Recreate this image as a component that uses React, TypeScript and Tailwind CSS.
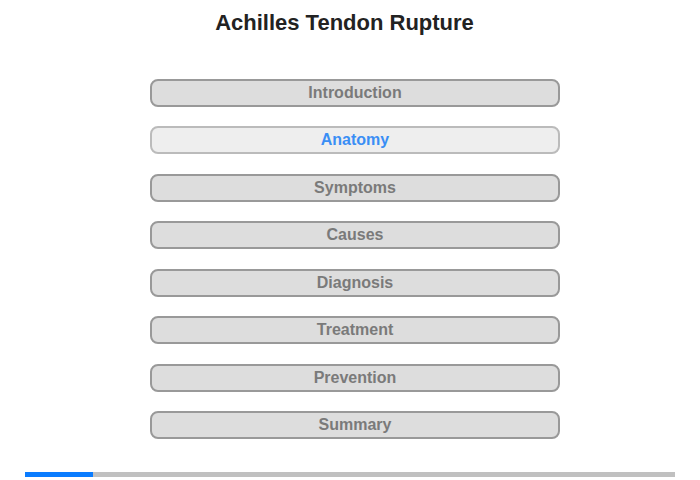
import React from "react";

const sections = [
  "Introduction",
  "Anatomy",
  "Symptoms",
  "Causes",
  "Diagnosis",
  "Treatment",
  "Prevention",
  "Summary",
];

const active = 1;

export default function App() {
  return (
    <div className="w-[700px] h-[480px] bg-white relative font-['Liberation_Sans',Arial,sans-serif]">
      <h1 className="pt-[10px] ml-[-11px] text-center text-[22px] font-bold leading-[26px] text-[#222]">
        Achilles Tendon Rupture
      </h1>
      <div className="mt-[43px] ml-[150px] w-[410px] flex flex-col">
        {sections.map((s, i) => (
          <div
            key={s}
            className={
              (i % 2 === 0 ? "mb-[19px] " : "mb-[20px] ") +
              (i === active
                ? "h-[28px] rounded-[8px] border-2 border-[#bbbbbb] bg-[#eeeeee] flex items-center justify-center text-[16px] font-bold text-[#3a8ef5]"
                : "h-[28px] rounded-[8px] border-2 border-[#999999] bg-[#dddddd] flex items-center justify-center text-[16px] font-bold text-[#7a7a7a]")
            }
          >
            {s}
          </div>
        ))}
      </div>
      <div className="absolute left-[25px] top-[472px] w-[650px] h-[5px] bg-[#c0c0c0] flex">
        <div className="w-[68px] h-full bg-[#0a7cff]" />
      </div>
    </div>
  );
}
